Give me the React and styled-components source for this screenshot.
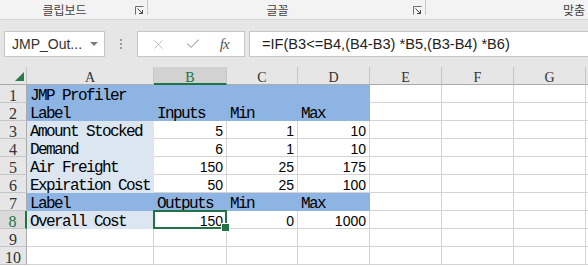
import React from 'react';
import styled, { createGlobalStyle } from 'styled-components';
import { X, Check } from 'lucide-react';

const GlobalStyle = createGlobalStyle`
  html, body {
    margin: 0;
    padding: 0;
    background: #ffffff;
    overflow: hidden;
  }
  * {
    box-sizing: border-box;
  }
`;

const GREEN = '#217346';
const BLUE = '#8eb4e3';
const LIGHT = '#dce6f1';
const GRID = '#d4d4d4';

const Page = styled.div`
  width: 588px;
  height: 267px;
  display: flex;
  flex-direction: column;
  overflow: hidden;
`;

// ===== Ribbon group labels
const Ribbon = styled.div`
  display: flex;
  height: 20px;
  background: #f3f3f3;
  border-bottom: 1px solid #d6d6d6;
  flex-shrink: 0;
`;

const Group = styled.div`
  position: relative;
  display: flex;
  align-items: center;
  justify-content: center;
  width: ${({ $width }) => $width}px;
  padding-right: ${({ $last }) => ($last ? '0' : '18px')};
  flex-shrink: 0;
  border-right: ${({ $last }) => ($last ? 'none' : '1px solid #c8c8c8')};
  margin-bottom: 4px;
`;

const GroupLabel = styled.span`
  font-family: 'Noto Sans CJK KR', 'Noto Sans', sans-serif;
  font-size: 12px;
  color: #444;
  line-height: 1;
  margin-top: 4px;
`;

const Launcher = styled.svg`
  position: absolute;
  right: 3px;
  bottom: 0px;
  width: 9px;
  height: 9px;
`;

// ===== Formula bar
const FormulaBar = styled.div`
  display: flex;
  height: 47px;
  padding: 11px 0 10px 4px;
  background: #e6e6e6;
  flex-shrink: 0;
`;

const NameBox = styled.div`
  width: 101px;
  display: flex;
  align-items: center;
  justify-content: space-between;
  padding: 0 6px 0 7px;
  background: #fff;
  border: 1px solid #c6c6c6;
  font-family: 'Liberation Sans', Arial, sans-serif;
  font-size: 14px;
  color: #333;
`;

const Caret = styled.span`
  width: 0;
  height: 0;
  border-left: 4px solid transparent;
  border-right: 4px solid transparent;
  border-top: 4px solid #7a7a7a;
  margin-top: -1px;
`;

const Grip = styled.div`
  width: 32px;
  display: flex;
  flex-direction: column;
  align-items: center;
  justify-content: center;
  gap: 2px;
`;

const GripDot = styled.span`
  width: 2px;
  height: 2px;
  background: #9a9a9a;
`;

const FxButtons = styled.div`
  width: 108px;
  display: flex;
  align-items: center;
  justify-content: space-around;
  padding: 0 6px 0 4px;
  background: #fff;
  border: 1px solid #c6c6c6;
`;

const FxLabel = styled.span`
  font-family: 'Liberation Serif', 'Times New Roman', serif;
  font-style: italic;
  font-size: 15px;
  color: #555;
  letter-spacing: -1px;
`;

const FormulaInput = styled.div`
  flex: 1;
  margin-left: 4px;
  margin-right: -2px;
  display: flex;
  align-items: center;
  padding-left: 12px;
  background: #fff;
  border: 1px solid #c6c6c6;
  font-family: 'Liberation Sans', Arial, sans-serif;
  font-size: 14.6px;
  color: #222;
  white-space: nowrap;
`;

// ===== Sheet grid
const Sheet = styled.div`
  display: grid;
  grid-template-columns: 27px 127px 73px 71px 72px 72px 72px 72px 72px;
  grid-auto-rows: 18px;
  background: #fff;
`;

const Corner = styled.div`
  position: relative;
  background: #e6e6e6;
  border-right: 1px solid #c6c6c6;
  border-bottom: 1px solid #ababab;
`;

const CornerMark = styled.div`
  position: absolute;
  right: 2px;
  bottom: 3px;
  width: 0;
  height: 0;
  border-left: 9px solid transparent;
  border-bottom: 9px solid #2b7a4b;
`;

const ColHead = styled.div`
  background: ${({ $active }) => ($active ? '#d2d2d2' : '#e6e6e6')};
  border-right: 1px solid #c6c6c6;
  border-bottom: ${({ $active }) => ($active ? `2px solid ${GREEN}` : '1px solid #ababab')};
  text-align: center;
  font-family: 'Liberation Serif', 'Times New Roman', serif;
  font-size: 14px;
  line-height: 17px;
  padding-top: 2px;
  color: ${({ $active }) => ($active ? GREEN : '#333')};
`;

const RowHead = styled.div`
  background: ${({ $active }) => ($active ? '#dadada' : '#e6e6e6')};
  border-right: ${({ $active }) => ($active ? `2px solid ${GREEN}` : '1px solid #ababab')};
  border-bottom: 1px solid #c6c6c6;
  text-align: center;
  font-family: 'Liberation Serif', 'Times New Roman', serif;
  font-size: 16px;
  line-height: 17px;
  padding-top: 2px;
  color: ${({ $active }) => ($active ? GREEN : '#333')};
`;

const Cell = styled.div`
  position: relative;
  background: ${({ $fill }) => $fill || '#fff'};
  border-right: 1px solid ${({ $fill }) => $fill || GRID};
  border-bottom: 1px solid ${({ $fill }) => $fill || GRID};
  white-space: nowrap;
  line-height: 17px;
  color: #000;
  ${({ $num }) =>
    $num
      ? `
    text-align: right;
    padding: 2px 3px 0 0;
    font-family: 'Liberation Sans', Arial, sans-serif;
    font-size: 14px;
  `
      : `
    text-align: left;
    padding: 3px 0 0 3px;
    font-family: 'Liberation Mono', 'Courier New', monospace;
    font-size: 16px;
    letter-spacing: -1.6px;
  `}
  ${({ $selected }) =>
    $selected &&
    `
    z-index: 2;
    &::after {
      content: '';
      position: absolute;
      inset: -1px;
      border: 2px solid ${GREEN};
      pointer-events: none;
    }
    &::before {
      content: '';
      position: absolute;
      right: -4px;
      bottom: -4px;
      width: 7px;
      height: 7px;
      background: ${GREEN};
      border: 1px solid #fff;
      z-index: 3;
    }
  `}
`;

// last column only peeks in at the right edge, so it has no visible letter
const columns = ['A', 'B', 'C', 'D', 'E', 'F', 'G', ''];

const rows = [
  [{ v: 'JMP Profiler', f: BLUE }, { f: BLUE }, { f: BLUE }, { f: BLUE }],
  [{ v: 'Label', f: BLUE }, { v: 'Inputs', f: BLUE }, { v: 'Min', f: BLUE }, { v: 'Max', f: BLUE }],
  [{ v: 'Amount Stocked', f: LIGHT }, { v: 5 }, { v: 1 }, { v: 10 }],
  [{ v: 'Demand', f: LIGHT }, { v: 6 }, { v: 1 }, { v: 10 }],
  [{ v: 'Air Freight', f: LIGHT }, { v: 150 }, { v: 25 }, { v: 175 }],
  [{ v: 'Expiration Cost', f: LIGHT }, { v: 50 }, { v: 25 }, { v: 100 }],
  [{ v: 'Label', f: BLUE }, { v: 'Outputs', f: BLUE }, { v: 'Min', f: BLUE }, { v: 'Max', f: BLUE }],
  [{ v: 'Overall Cost', f: LIGHT }, { v: 150, sel: true }, { v: 0 }, { v: 1000 }],
  [],
  [],
];

function LauncherIcon() {
  return (
    <Launcher viewBox="0 0 9 9">
      <path d="M0.5 8.5 V0.5 H8.5" stroke="#6d6d6d" fill="none" strokeWidth="1" />
      <path d="M2.5 2.5 L7.5 7.5 M4 7.5 H7.5 V4" stroke="#444" fill="none" strokeWidth="1" />
    </Launcher>
  );
}

export default function App() {
  return (
    <Page>
      <GlobalStyle />
      <Ribbon>
        <Group $width={148}>
          <GroupLabel>클립보드</GroupLabel>
          <LauncherIcon />
        </Group>
        <Group $width={278}>
          <GroupLabel>글꼴</GroupLabel>
          <LauncherIcon />
        </Group>
        <Group $width={296} $last>
          <GroupLabel>맞춤</GroupLabel>
        </Group>
      </Ribbon>

      <FormulaBar>
        <NameBox>
          <span>JMP_Out...</span>
          <Caret />
        </NameBox>
        <Grip>
          <GripDot />
          <GripDot />
          <GripDot />
        </Grip>
        <FxButtons>
          <X size={15} color="#b4b4b4" strokeWidth={1.4} />
          <Check size={16} color="#b4b4b4" strokeWidth={1.8} />
          <FxLabel>fx</FxLabel>
        </FxButtons>
        <FormulaInput>=IF(B3&lt;=B4,(B4-B3) *B5,(B3-B4) *B6)</FormulaInput>
      </FormulaBar>

      <Sheet>
        <Corner>
          <CornerMark />
        </Corner>
        {columns.map((c, i) => (
          <ColHead key={i} $active={c === 'B'}>
            {c}
          </ColHead>
        ))}
        {rows.map((row, r) => (
          <React.Fragment key={r}>
            <RowHead $active={r === 7}>{r + 1}</RowHead>
            {columns.map((c, i) => {
              const cell = row[i] || {};
              return (
                <Cell
                  key={i}
                  $fill={cell.f}
                  $num={typeof cell.v === 'number'}
                  $selected={cell.sel}
                >
                  {cell.v}
                </Cell>
              );
            })}
          </React.Fragment>
        ))}
      </Sheet>
    </Page>
  );
}
